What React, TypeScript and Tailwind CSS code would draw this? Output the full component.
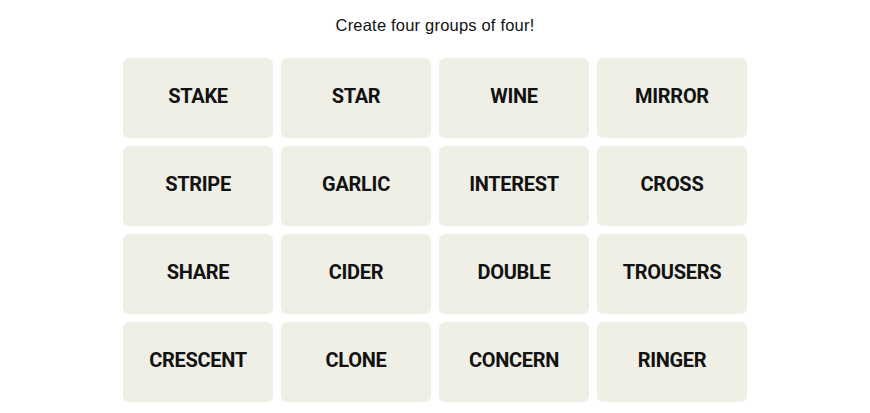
import React from "react";

const words = [
  "STAKE", "STAR", "WINE", "MIRROR",
  "STRIPE", "GARLIC", "INTEREST", "CROSS",
  "SHARE", "CIDER", "DOUBLE", "TROUSERS",
  "CRESCENT", "CLONE", "CONCERN", "RINGER",
];

export default function App() {
  return (
    <div className="w-[870px] h-[413px] bg-white flex flex-col items-center">
      <p className="mt-[15px] h-[20px] leading-[20px] text-[16.5px] text-[#121212] font-['Liberation_Sans',sans-serif] tracking-[0.2px]">
        Create four groups of four!
      </p>
      <div className="mt-[23px] grid grid-cols-[repeat(4,150px)] auto-rows-[80px] gap-[8px]">
        {words.map((w) => (
          <div
            key={w}
            className="bg-[#efefe6] rounded-[6px] flex items-center justify-center pb-[4px] text-[20px] font-bold text-[#121212] font-['Roboto',sans-serif] tracking-[-0.3px]"
          >
            {w}
          </div>
        ))}
      </div>
    </div>
  );
}
